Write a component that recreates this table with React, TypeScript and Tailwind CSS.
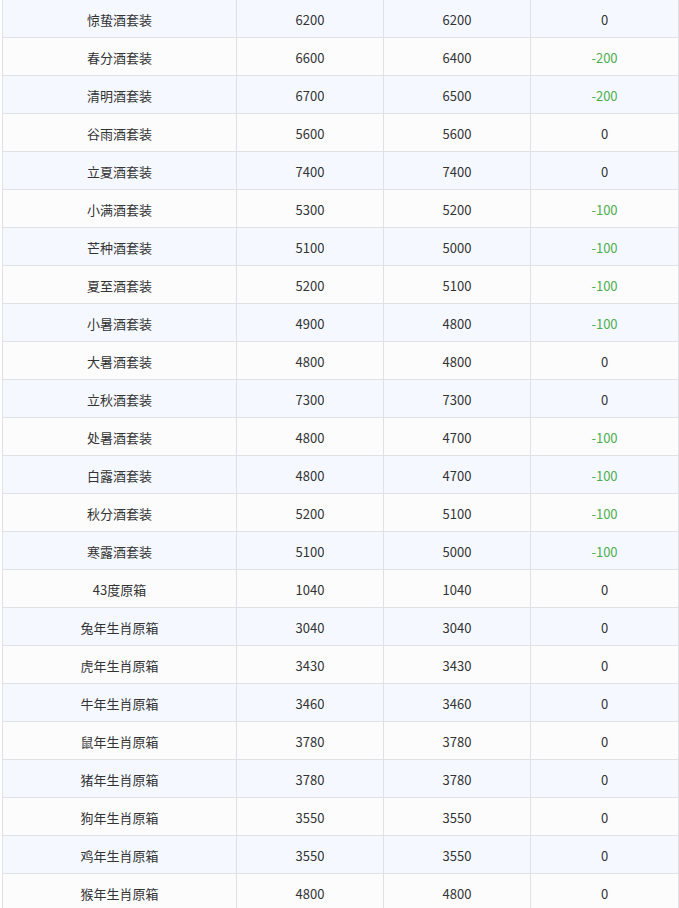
const rows: Array<[string, number, number]> = [
  ['惊蛰酒套装', 6200, 6200],
  ['春分酒套装', 6600, 6400],
  ['清明酒套装', 6700, 6500],
  ['谷雨酒套装', 5600, 5600],
  ['立夏酒套装', 7400, 7400],
  ['小满酒套装', 5300, 5200],
  ['芒种酒套装', 5100, 5000],
  ['夏至酒套装', 5200, 5100],
  ['小暑酒套装', 4900, 4800],
  ['大暑酒套装', 4800, 4800],
  ['立秋酒套装', 7300, 7300],
  ['处暑酒套装', 4800, 4700],
  ['白露酒套装', 4800, 4700],
  ['秋分酒套装', 5200, 5100],
  ['寒露酒套装', 5100, 5000],
  ['43度原箱', 1040, 1040],
  ['兔年生肖原箱', 3040, 3040],
  ['虎年生肖原箱', 3430, 3430],
  ['牛年生肖原箱', 3460, 3460],
  ['鼠年生肖原箱', 3780, 3780],
  ['猪年生肖原箱', 3780, 3780],
  ['狗年生肖原箱', 3550, 3550],
  ['鸡年生肖原箱', 3550, 3550],
  ['猴年生肖原箱', 4800, 4800],
]

export default function App() {
  return (
    <div
      className="bg-white pl-[2px] h-[908px] overflow-hidden text-[13px] text-[#333]"
      style={{ fontFamily: '"Noto Sans CJK SC", "Noto Sans", sans-serif' }}
    >
      <div className="w-[677px] border-x border-[#dfe1e5]">
        {rows.map(([name, before, after], i) => {
          const diff = after - before
          return (
            <div
              key={name}
              className={`grid grid-cols-[233px_147px_147px_1fr] h-[38px] border-b border-[#dfe1e5] ${
                i % 2 === 0 ? 'bg-[#f5f9ff]' : 'bg-[#fcfcfd]'
              }`}
            >
              <div className="flex items-center justify-center pt-[2px]">{name}</div>
              <div className="flex items-center justify-center pt-[2px] border-l border-[#dfe1e5]">{before}</div>
              <div className="flex items-center justify-center pt-[2px] border-l border-[#dfe1e5]">{after}</div>
              <div
                className={`flex items-center justify-center pt-[2px] border-l border-[#dfe1e5] ${
                  diff < 0 ? 'text-[#4cae4c]' : ''
                }`}
              >
                {diff}
              </div>
            </div>
          )
        })}
      </div>
    </div>
  )
}
